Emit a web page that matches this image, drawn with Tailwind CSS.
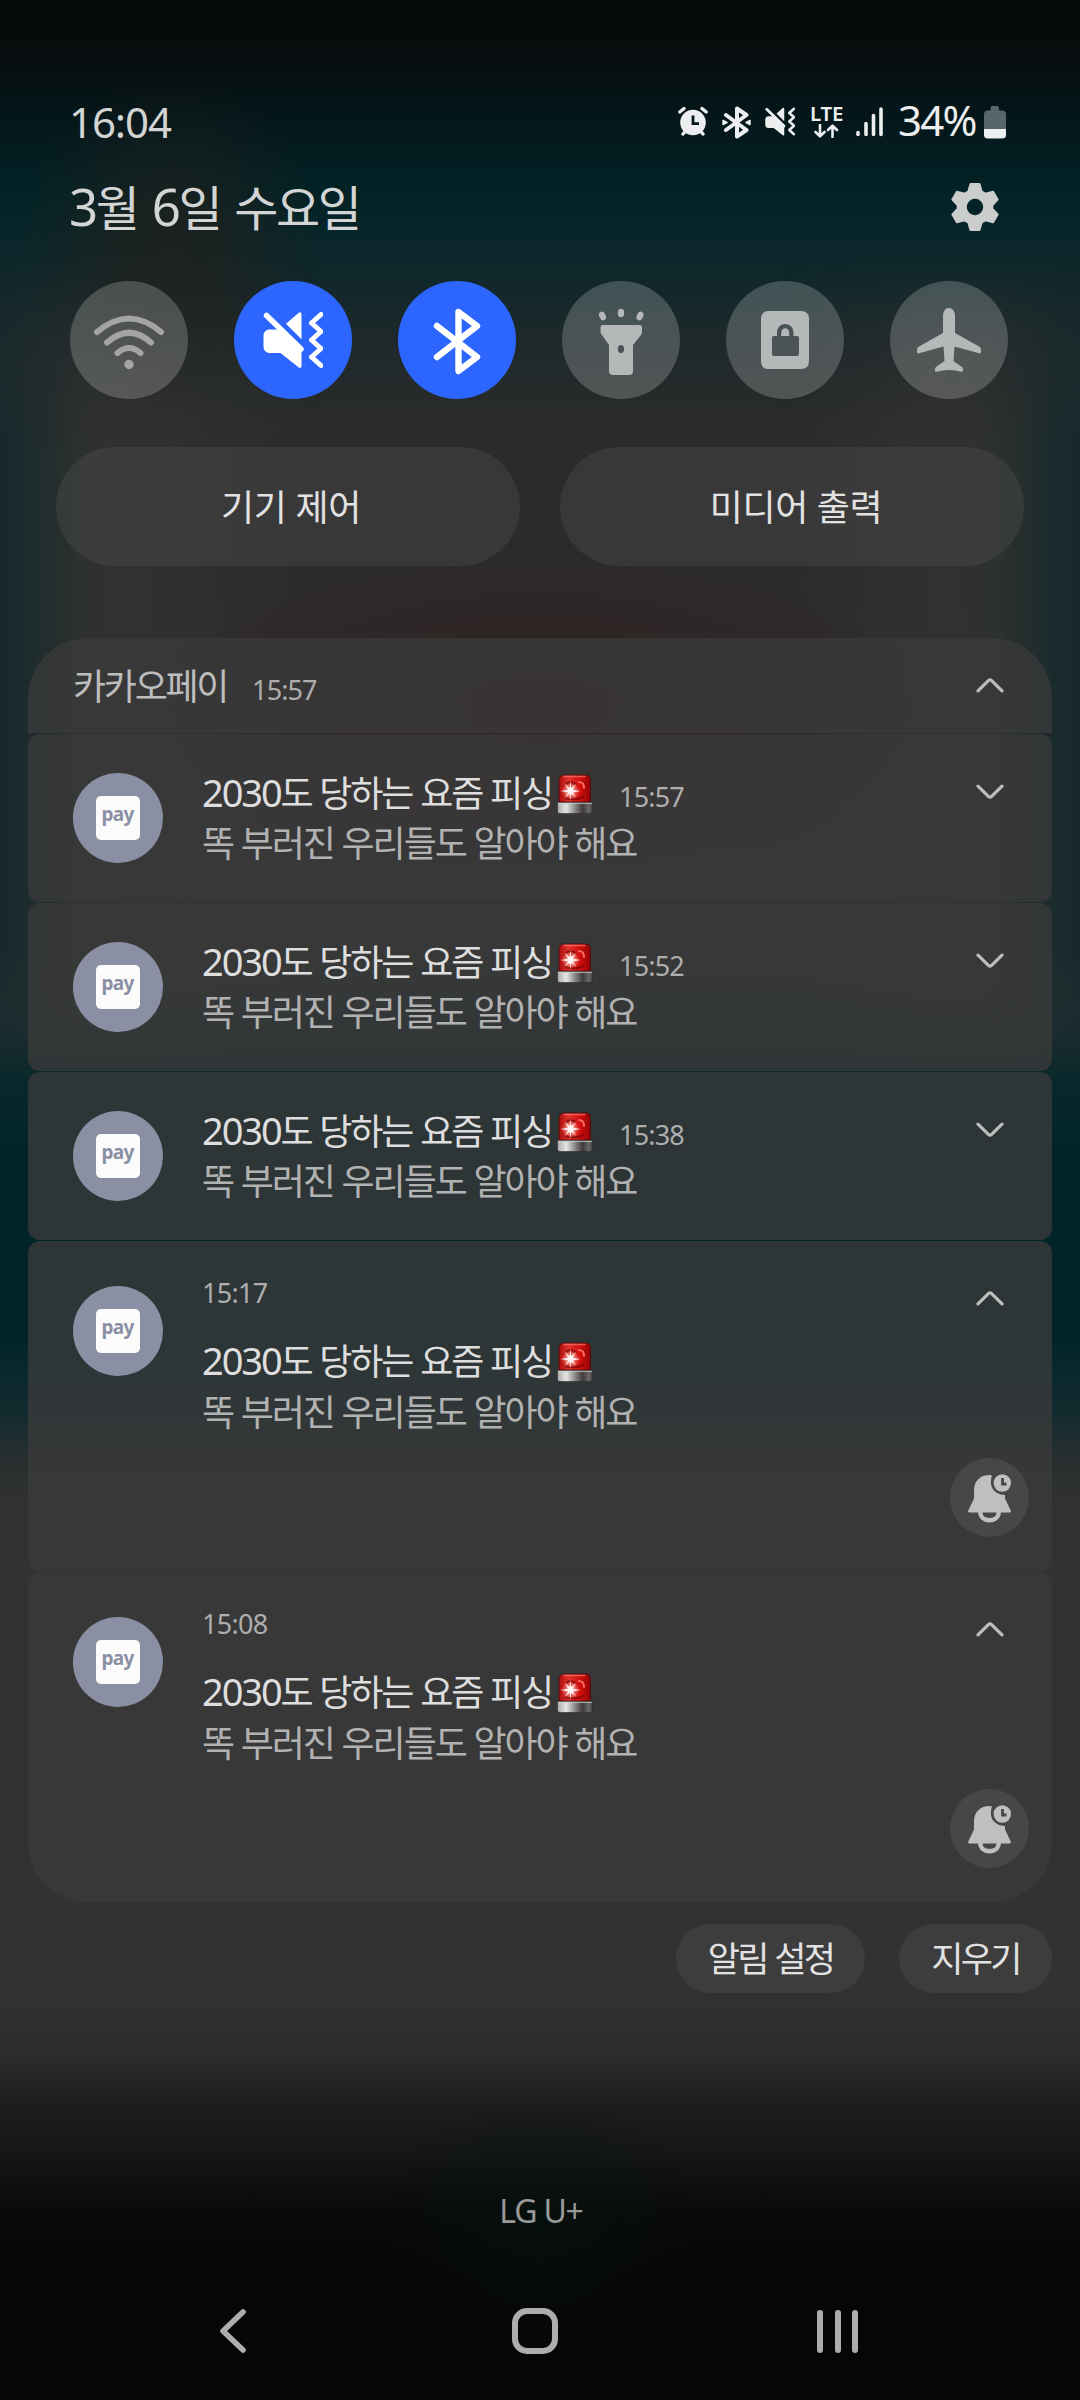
<!DOCTYPE html>
<html lang="ko">
<head>
<meta charset="utf-8">
<title>알림 패널</title>
<script src="https://cdn.jsdelivr.net/npm/@tailwindcss/browser@4"></script>
</head>
<body class="bg-black">
<svg class="absolute size-0">
  <defs>
    <linearGradient id="red" x1="0" x2="1" y1="0" y2="0"><stop offset="0" stop-color="#a80d0c"/><stop offset=".3" stop-color="#e0322c"/><stop offset=".7" stop-color="#cf0d0b"/><stop offset="1" stop-color="#8d0505"/></linearGradient>
    <linearGradient id="steel" x1="0" x2="1" y1="0" y2="0"><stop offset="0" stop-color="#a9a9a9"/><stop offset=".25" stop-color="#e6e6e6"/><stop offset=".5" stop-color="#8a8787"/><stop offset=".72" stop-color="#3f3a3b"/><stop offset=".9" stop-color="#6d6a6a"/><stop offset="1" stop-color="#3c3c3c"/></linearGradient>
    <radialGradient id="glow"><stop offset="0" stop-color="#fff"/><stop offset=".35" stop-color="#ffc9c0" stop-opacity=".7"/><stop offset="1" stop-color="#ff8a80" stop-opacity="0"/></radialGradient>
  </defs>
  <symbol id="siren" viewBox="0 0 36 40">
    <path d="M2 28V6C2 2.500 4.500 1 8 1h20c3.500 0 5.500 1.500 5.500 5v22z" fill="url(#red)" stroke="#4a0a0a" stroke-width=".8"/>
    <path d="M7 2.500h21" stroke="#ff7a6e" stroke-width="1.500" stroke-linecap="round" opacity=".7"/>
    <path d="M22 8c4-1 6 3 5 7M9 10c3-3 8-2 10 1M8 24c5 2 15 2 19-2" fill="none" stroke="#7d0606" stroke-width="2" opacity=".8"/>
    <path d="M22 8c3 0 5 2 5 6" fill="none" stroke="#ff6a60" stroke-width="2" stroke-linecap="round"/>
    <circle cx="13.500" cy="17" r="9" fill="url(#glow)"/>
    <path d="M13.500 6.500l.8 7.500 5-4-3.500 5.700 8 1.300-8 1.400 3.500 5.400-5-4-.8 7.500-.8-7.500-5 4 3.500-5.400-8-1.400 8-1.300-3.500-5.700 5 4z" fill="#fff" opacity=".85"/>
    <path d="M.5 28.500h35v9c0 1.300-1 2-3 2h-29c-2 0-3-.7-3-2z" fill="url(#steel)" stroke="#2b2b2b" stroke-width=".6"/>
    <path d="M1 29.300h34" stroke="#cfcfcf" stroke-width=".9"/>
  </symbol>
  <symbol id="up" viewBox="0 0 28 15"><path d="M2 12.800L12.600 2.400Q14 1.200 15.400 2.400L26 12.800" fill="none" stroke="currentColor" stroke-width="3.200" stroke-linecap="round"/></symbol>
  <symbol id="down" viewBox="0 0 28 15"><path d="M2 2.200L12.600 12.600Q14 13.800 15.400 12.600L26 2.200" fill="none" stroke="currentColor" stroke-width="3.200" stroke-linecap="round"/></symbol>
  <symbol id="mute" viewBox="0 0 60 58">
    <path d="M3.500 4.500L38 38" stroke="currentColor" stroke-width="5.500" stroke-linecap="round"/>
    <path d="M7 18.500h9L38.500 36v19c0 2-1.500 2.500-3 1.300L17.500 42H7c-4 0-6.500-2.500-6.500-6.500v-10.500c0-4 2.500-6.500 6.500-6.500z" fill="currentColor"/>
    <path d="M23 12.800L35.500 2c1.500-1.300 3-.6 3 1.300v25z" fill="currentColor"/>
    <path d="M58 3.500l-9.500 8.500 9.500 8.500-9.500 8.500 9.500 8.500-9.500 8.500 9.500 8.500" fill="none" stroke="currentColor" stroke-width="5" stroke-linecap="round" stroke-linejoin="round"/>
  </symbol>
  <symbol id="snooze" viewBox="0 0 79 79">
    <path d="M42 17.500C39.500 25 40.500 36 55 37v3.500l5.700 12c.6 1.300 0 2-1.200 2h-40c-1.200 0-1.800-.7-1.200-2L24 40.500V32c0-9 6.500-15 15.500-15z" fill="currentColor"/>
    <path d="M30.300 54c0 5 4 8.200 9.200 8.200s9.200-3.200 9.200-8.200" fill="none" stroke="currentColor" stroke-width="4.500"/>
    <circle cx="52.300" cy="25" r="8.700" fill="currentColor"/>
    <path d="M52.500 20v6h4" fill="none" stroke="#474747" stroke-width="2.800"/>
  </symbol>
</svg>

<main class="relative isolate flex h-[2400px] w-[1080px] flex-col overflow-hidden text-[#d3d4d4] [font-family:'Noto_Sans','Noto_Sans_CJK_KR',sans-serif]">
  <!-- blurred wallpaper -->
  <div class="absolute inset-0 -z-20 bg-[linear-gradient(180deg,#070a0b_0px,#070c0d_50px,#04171b_120px,#022226_190px,#0c272b_260px,#1e292b_340px,#2b2b2b_430px,#2c2b2b_560px,#2e2b2b_640px,#303030_860px,#303131_960px,#1c2d30_1030px,#06272b_1090px,#02252a_1150px,#02252a_1340px,#122b2f_1410px,#2a2f30_1465px,#333232_1520px,#323232_1990px,#2c2c2c_2055px,#1e1e1e_2105px,#141515_2160px,#090a09_2210px,#060606_2280px,#060606_2400px)]"></div>
  <div class="absolute inset-x-0 top-[250px] -z-10 h-[820px] bg-[linear-gradient(90deg,#17292d_0px,#1b2b2e_20px,#232d2d_50px,#2f3131_85px,#333333cc_140px,#33333300_320px,#33333300_780px,#333333cc_930px,#2f3131_985px,#232d2d_1030px,#1a2b2e_1055px,#17292d_1080px)] [mask-image:linear-gradient(180deg,transparent,black_200px,black_700px,transparent)]"></div>
  <div class="absolute left-[20px] top-[70px] -z-10 h-[340px] w-[300px] bg-[radial-gradient(closest-side,#25201baa_0%,#25201b88_35%,#28211b00_100%)]"></div>
  <div class="absolute left-[140px] top-[540px] -z-10 h-[340px] w-[800px] bg-[radial-gradient(closest-side,#2f2020_0%,#2f212199_45%,#301f2000_100%)]"></div>
  <div class="absolute left-[380px] top-[2080px] -z-10 h-[280px] w-[320px] bg-[radial-gradient(closest-side,#06140f99_0%,#06140f00_100%)]"></div>

  <!-- status bar -->
  <div class="mt-[96px] flex h-[50px] pl-[69px] pr-[74px]">
    <div class="pt-px text-[42px] leading-[50px] tracking-[-1.100px]">16:04</div>
    <div class="ml-auto flex pt-[10px] text-[#eceeef]">
      <svg class="mr-[14px] h-[31px] w-[30px]" viewBox="0 0 30 31"><path d="M1.800 6L6 2.500M28.200 6L24 2.500M5 28l3-3.500M25 28l-3-3.500" stroke="currentColor" stroke-width="3.400" stroke-linecap="round"/><circle cx="15" cy="16.500" r="12.800" fill="currentColor"/><path d="M15 9.500v8.200h6" fill="none" stroke="#03181c" stroke-width="2.800"/></svg>
      <svg class="mr-[14px] h-[33px] w-[29px]" viewBox="0 0 29 33"><path d="M4 9l20.500 15-9.500 6.500V2.500L24.500 9 4 24" fill="none" stroke="currentColor" stroke-width="4" stroke-linecap="round" stroke-linejoin="round"/><path d="M1 14.500l4 2-4 2zM28 14.500l-4 2 4 2z" fill="currentColor" stroke="currentColor" stroke-width="1.500" stroke-linejoin="round"/></svg>
      <svg class="mr-[15px] mt-px h-[29px] w-[30px]"><use href="#mute"/></svg>
      <div class="mr-[12px] h-[34px] w-[34px]">
        <div class="-mt-px h-[16px] text-[20.500px] font-semibold leading-[16px] tracking-[-0.200px]">LTE</div>
        <svg class="ml-[3px] mt-[3px] h-[14px] w-[26px]" viewBox="0 0 26 14"><path d="M7 1v11M2.500 8L7 12.300 11.500 8M19.500 13V2M15 6l4.500-4.300L24 6" fill="none" stroke="currentColor" stroke-width="2.600" stroke-linecap="round" stroke-linejoin="round"/></svg>
      </div>
      <svg class="mt-px h-[30px] w-[28px]" viewBox="0 0 28 30"><path d="M2 25.500v2M10 16.500v11M17.500 8.500v19M25 2v25.500" stroke="currentColor" stroke-width="3.600" stroke-linecap="round"/></svg>
      <div class="-mt-[11px] ml-[14px] w-[86px] whitespace-nowrap text-[42px] leading-[50px] tracking-[-1.800px]">34%</div>
      <svg class="h-[33px] w-[22px]" viewBox="0 0 22 33"><path d="M6.500 4.500V2q0-2 2-2h4.500q2 0 2 2v2.500h3q4 0 4 4V23H0V8.500q0-4 4-4z" fill="#56666a"/><path d="M0 23h22v6q0 3.500-4 3.500H4q-4 0-4-3.500z" fill="#eceeef"/></svg>
    </div>
  </div>

  <!-- date -->
  <div class="mt-[30px] flex h-[60px] pl-[69px] pr-[80px]">
    <div class="whitespace-nowrap text-[48px] leading-[60px] tracking-[-2.400px] [word-spacing:4px]"><span class="text-[51px]">3</span>월 <span class="text-[51px]">6</span>일 수요일</div>
    <svg class="ml-auto mt-[6px] h-[50px] w-[50px] text-[#cbcccc]" viewBox="-25 -25 50 50"><path fill-rule="evenodd" fill="currentColor" stroke="currentColor" stroke-width="2" stroke-linejoin="round" d="M-4.500-23h9l2.200 7.500 3.800 2.200 7.600-2 4.500 7.800-5.300 5.700v3.600l5.300 5.700-4.500 7.800-7.600-2-3.800 2.200-2.200 7.500h-9l-2.200-7.500-3.800-2.200-7.600 2-4.500-7.800 5.300-5.700v-3.600l-5.300-5.700 4.500-7.800 7.600 2 3.800-2.200zM9.200 0a9.200 9.200 0 1 0-18.400 0a9.200 9.200 0 1 0 18.400 0z"/></svg>
  </div>

  <!-- quick toggles -->
  <div class="mt-[45px] flex h-[118px] justify-between px-[70px] pr-[72px] text-[#b4b8b8]">
    <svg class="size-[118px] rounded-full bg-white/20 text-[#a3a4a3]" viewBox="0 0 118 118"><g fill="none" stroke="currentColor" stroke-width="6" stroke-linecap="round"><path d="M27 51Q59 24 91 51M37 61.500Q59 42 81 61.500M47.500 72Q59 62 70.500 72"/></g><circle cx="59" cy="83.500" r="4.700" fill="currentColor"/></svg>
    <div class="flex size-[118px] items-center justify-center rounded-full bg-[#2c66ff] text-white"><svg class="h-[58px] w-[60px]"><use href="#mute"/></svg></div>
    <svg class="size-[118px] rounded-full bg-[#2c66ff] text-white" viewBox="0 0 118 118"><path d="M39 45l40 31-18.500 14V31L79 45 39 76" fill="none" stroke="currentColor" stroke-width="6.400" stroke-linecap="round" stroke-linejoin="round"/></svg>
    <svg class="size-[118px] rounded-full bg-white/20" viewBox="0 0 118 118"><path fill-rule="evenodd" fill="currentColor" d="M40.500 44h37q2.500 0 2.500 2.500V51q0 1.500-1 3l-8 10v26q0 4-4 4H51q-4 0-4-4V64l-7-10q-1.500-1.500-1.500-3v-4.500q0-2.500 2-2.500zM59 64c-4.200 0-4.200 8.200 0 8.200s4.200-8.200 0-8.200z"/><g fill="currentColor"><ellipse cx="59" cy="32" rx="3.200" ry="4.200"/><ellipse cx="40.500" cy="35" rx="3.200" ry="4.500" transform="rotate(-25 40.500 35)"/><ellipse cx="78" cy="35" rx="3.200" ry="4.500" transform="rotate(25 78 35)"/></g></svg>
    <svg class="size-[118px] rounded-full bg-white/20" viewBox="0 0 118 118"><path fill-rule="evenodd" fill="currentColor" d="M43 30h32q8 0 8 8v42q0 8-8 8H43q-8 0-8-8V38q0-8 8-8zM48 55q-2 0-2 2v16q0 2 2 2h23q2 0 2-2V57q0-2-2-2h-3.500v-3c0-12-16.500-12-16.500 0v3zM55.200 55v-3c0-6.500 8-6.500 8 0v3z"/></svg>
    <svg class="size-[118px] rounded-full bg-white/20" viewBox="0 0 118 118"><path fill="currentColor" d="M59 27c4 0 6 4 6 8v17l24 13.500q2 1 2 3v2.500q0 2-2 1.300L64.500 65.500 63.500 80l8.500 6q1 .8 1 2v1.800q0 1.300-1.500 1-12.500-3.400-25 0-1.500.3-1.500-1V88q0-1.200 1-2l8.500-6-1-14.500L29 72.300q-2 .7-2-1.300v-2.500q0-2 2-3L53 52V35c0-4 2-8 6-8z"/></svg>
  </div>

  <!-- device / media -->
  <div class="mt-[48px] grid h-[119px] grid-cols-2 gap-[40px] px-[56px] text-center text-[36px] leading-[117px] tracking-[-0.400px] text-[#e2e2e2]">
    <div class="rounded-full bg-[#4e4e4e]/40 pl-[6px] pt-[2px]">기기 제어</div>
    <div class="rounded-full bg-[#4e4e4e]/40 pl-[8px] pt-[2px]">미디어 출력</div>
  </div>

  <!-- notification group -->
  <section class="mx-[28px] mt-[72px] flex flex-col gap-px">
    <header class="flex h-[95px] items-baseline rounded-t-[60px] bg-[#3b3b3b]/77 pl-[45px] pr-[48px] pt-[24px] text-[#bdbdbd]">
      <div class="text-[36px] leading-[50px] tracking-[-2.300px]">카카오페이</div>
      <div class="ml-[25px] text-[27px] tracking-[-0.900px] text-[#aeaeae]">15:57</div>
      <svg class="ml-auto h-[15px] w-[28px] -translate-y-[7px]"><use href="#up"/></svg>
    </header>

    <article class="flex h-[168px] rounded-xl bg-[#3b3b3b]/77 pl-[45px] pr-[48px]">
      <div class="mt-[39px] flex size-[90px] items-center justify-center rounded-full bg-[#8a8fa4]"><div class="h-[44px] w-[44px] rounded-[5px] bg-[#fbfbfb] pr-px text-center text-[19px] font-bold leading-[37px] tracking-[-0.700px] text-[#8a8fa4]">pay</div></div>
      <div class="ml-[39px] mt-[33px] whitespace-nowrap text-[36px] leading-[50px] tracking-[-2.100px] [word-spacing:.5px]">
        <div class="flex h-[52px] items-baseline text-[#dedede]"><div><span class="text-[38px]">2030</span>도 당하는 요즘 피싱</div><svg class="ml-[5px] h-[40px] w-[36px] translate-y-[7px]"><use href="#siren"/></svg><span class="ml-[26px] text-[27px] tracking-[-0.800px] text-[#aeaeae]">15:57</span></div>
        <div class="text-[#b2b2b2]">똑 부러진 우리들도 알아야 해요</div>
      </div>
      <svg class="ml-auto mt-[50px] h-[15px] w-[28px] text-[#bdbdbd]"><use href="#down"/></svg>
    </article>

    <article class="flex h-[168px] rounded-xl bg-[#3b3b3b]/77 pl-[45px] pr-[48px]">
      <div class="mt-[39px] flex size-[90px] items-center justify-center rounded-full bg-[#8a8fa4]"><div class="h-[44px] w-[44px] rounded-[5px] bg-[#fbfbfb] pr-px text-center text-[19px] font-bold leading-[37px] tracking-[-0.700px] text-[#8a8fa4]">pay</div></div>
      <div class="ml-[39px] mt-[33px] whitespace-nowrap text-[36px] leading-[50px] tracking-[-2.100px] [word-spacing:.5px]">
        <div class="flex h-[52px] items-baseline text-[#dedede]"><div><span class="text-[38px]">2030</span>도 당하는 요즘 피싱</div><svg class="ml-[5px] h-[40px] w-[36px] translate-y-[7px]"><use href="#siren"/></svg><span class="ml-[26px] text-[27px] tracking-[-0.800px] text-[#aeaeae]">15:52</span></div>
        <div class="text-[#b2b2b2]">똑 부러진 우리들도 알아야 해요</div>
      </div>
      <svg class="ml-auto mt-[50px] h-[15px] w-[28px] text-[#bdbdbd]"><use href="#down"/></svg>
    </article>

    <article class="flex h-[168px] rounded-xl bg-[#3b3b3b]/77 pl-[45px] pr-[48px]">
      <div class="mt-[39px] flex size-[90px] items-center justify-center rounded-full bg-[#8a8fa4]"><div class="h-[44px] w-[44px] rounded-[5px] bg-[#fbfbfb] pr-px text-center text-[19px] font-bold leading-[37px] tracking-[-0.700px] text-[#8a8fa4]">pay</div></div>
      <div class="ml-[39px] mt-[33px] whitespace-nowrap text-[36px] leading-[50px] tracking-[-2.100px] [word-spacing:.5px]">
        <div class="flex h-[52px] items-baseline text-[#dedede]"><div><span class="text-[38px]">2030</span>도 당하는 요즘 피싱</div><svg class="ml-[5px] h-[40px] w-[36px] translate-y-[7px]"><use href="#siren"/></svg><span class="ml-[26px] text-[27px] tracking-[-0.800px] text-[#aeaeae]">15:38</span></div>
        <div class="text-[#b2b2b2]">똑 부러진 우리들도 알아야 해요</div>
      </div>
      <svg class="ml-auto mt-[50px] h-[15px] w-[28px] text-[#bdbdbd]"><use href="#down"/></svg>
    </article>

    <article class="flex h-[330px] rounded-xl bg-[#3b3b3b]/77 pl-[45px] pr-[23px]">
      <div class="mt-[45px] flex size-[90px] items-center justify-center rounded-full bg-[#8a8fa4]"><div class="h-[44px] w-[44px] rounded-[5px] bg-[#fbfbfb] pr-px text-center text-[19px] font-bold leading-[37px] tracking-[-0.700px] text-[#8a8fa4]">pay</div></div>
      <div class="ml-[39px] mt-[32px] whitespace-nowrap text-[36px] leading-[50px] tracking-[-2.100px] [word-spacing:.5px]">
        <div class="mb-[22px] text-[27px] leading-[40px] tracking-[-0.700px] text-[#aeaeae]">15:17</div>
        <div class="flex h-[53px] items-baseline text-[#dedede]"><div><span class="text-[38px]">2030</span>도 당하는 요즘 피싱</div><svg class="ml-[5px] h-[40px] w-[36px] translate-y-[7px]"><use href="#siren"/></svg></div>
        <div class="text-[#b2b2b2]">똑 부러진 우리들도 알아야 해요</div>
      </div>
      <div class="ml-auto flex flex-col items-center justify-between pb-[34px] pt-[50px] text-[#bfbfbf]">
        <svg class="h-[15px] w-[28px]"><use href="#up"/></svg>
        <svg class="size-[79px] rounded-full bg-white/8"><use href="#snooze"/></svg>
      </div>
    </article>

    <article class="flex h-[330px] rounded-b-[60px] rounded-t-xl bg-[#3b3b3b]/77 pl-[45px] pr-[23px]">
      <div class="mt-[45px] flex size-[90px] items-center justify-center rounded-full bg-[#8a8fa4]"><div class="h-[44px] w-[44px] rounded-[5px] bg-[#fbfbfb] pr-px text-center text-[19px] font-bold leading-[37px] tracking-[-0.700px] text-[#8a8fa4]">pay</div></div>
      <div class="ml-[39px] mt-[32px] whitespace-nowrap text-[36px] leading-[50px] tracking-[-2.100px] [word-spacing:.5px]">
        <div class="mb-[22px] text-[27px] leading-[40px] tracking-[-0.700px] text-[#aeaeae]">15:08</div>
        <div class="flex h-[53px] items-baseline text-[#dedede]"><div><span class="text-[38px]">2030</span>도 당하는 요즘 피싱</div><svg class="ml-[5px] h-[40px] w-[36px] translate-y-[7px]"><use href="#siren"/></svg></div>
        <div class="text-[#b2b2b2]">똑 부러진 우리들도 알아야 해요</div>
      </div>
      <div class="ml-auto flex flex-col items-center justify-between pb-[34px] pt-[50px] text-[#bfbfbf]">
        <svg class="h-[15px] w-[28px]"><use href="#up"/></svg>
        <svg class="size-[79px] rounded-full bg-white/8"><use href="#snooze"/></svg>
      </div>
    </article>
  </section>

  <!-- actions -->
  <div class="mr-[28px] mt-[22px] flex h-[69px] justify-end gap-[34px] text-center text-[35px] leading-[68px] tracking-[-2.700px] text-[#e2e2e2] [word-spacing:1px]">
    <div class="w-[189px] rounded-full bg-[#3d3d3d] pt-px">알림 설정</div>
    <div class="w-[153px] rounded-full bg-[#3d3d3d] pt-px">지우기</div>
  </div>

  <div class="mt-[198px] pl-[2px] text-center text-[32px] leading-[40px] tracking-[-1.200px] text-[#979a99]">LG U+</div>

  <!-- navigation bar -->
  <nav class="mt-[77px] flex h-[46px] items-center justify-between pl-[218px] pr-[222px] text-[#adadad]">
    <svg class="h-[44px] w-[28px]" viewBox="0 0 28 44"><path d="M25 3L5 22l20 19" fill="none" stroke="currentColor" stroke-width="5.600" stroke-linecap="round" stroke-linejoin="round"/></svg>
    <div class="ml-[6px] h-[46px] w-[46px] rounded-[15px] border-[6px] border-current"></div>
    <div class="flex gap-[11.500px]"><i class="h-[43px] w-[6px] rounded-full bg-current"></i><i class="h-[43px] w-[6px] rounded-full bg-current"></i><i class="h-[43px] w-[6px] rounded-full bg-current"></i></div>
  </nav>
</main>
</body>
</html>
